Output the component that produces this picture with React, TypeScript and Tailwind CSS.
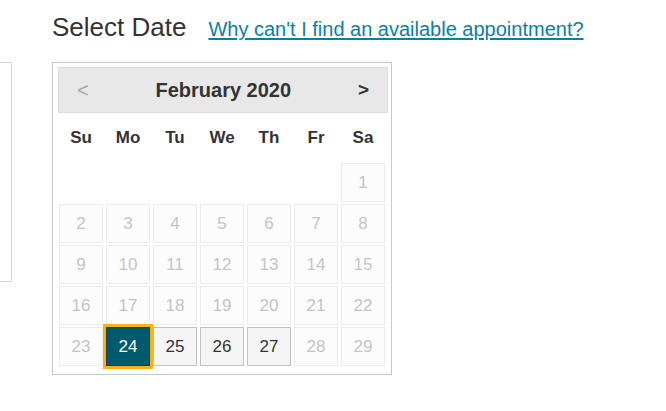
import React from 'react';

type Day = { n: number; state: 'off' | 'open' | 'selected' } | null;

const weekDays = ['Su', 'Mo', 'Tu', 'We', 'Th', 'Fr', 'Sa'];

const open = [25, 26, 27];

function buildWeeks(): Day[][] {
  const cells: Day[] = Array(6).fill(null);
  for (let n = 1; n <= 29; n++) {
    cells.push({ n, state: n === 24 ? 'selected' : open.includes(n) ? 'open' : 'off' });
  }
  const weeks: Day[][] = [];
  for (let i = 0; i < cells.length; i += 7) weeks.push(cells.slice(i, i + 7));
  return weeks;
}

function DayCell({ day }: { day: Day }) {
  if (!day) return <div className="w-[44px] h-[39px]" />;
  if (day.state === 'selected') {
    return (
      <button
        type="button"
        className="w-[44px] h-[39px] flex items-center justify-center bg-[#005a6e] border border-[#2b3a40] outline-[3px] outline-solid outline-[#fbb116] text-white text-[17px]"
      >
        {day.n}
      </button>
    );
  }
  if (day.state === 'open') {
    return (
      <button
        type="button"
        className="w-[44px] h-[39px] flex items-center justify-center bg-[#f5f5f5] border border-[#c2c2c2] text-[#333] text-[17px]"
      >
        {day.n}
      </button>
    );
  }
  return (
    <div className="w-[44px] h-[39px] flex items-center justify-center bg-[#fcfcfc] border border-[#ebebeb] text-[#c4c4c4] text-[17px]">
      {day.n}
    </div>
  );
}

export default function App() {
  const weeks = buildWeeks();
  return (
    <div className="flex w-[666px] h-[411px] bg-white font-['Liberation_Sans',Arial,sans-serif] overflow-hidden">
      <div className="w-[12px] h-[220px] mt-[62px] shrink-0 border-y border-r border-[#d4d4d4]" />

      <div className="ml-[40px] flex flex-col">
        <div className="flex items-baseline gap-[22px] mt-[12px]">
          <h2 className="text-[26px] leading-[30px] text-[#333]">Select Date</h2>
          <a href="#" className="text-[20px] leading-[24px] text-[#0a7fa3] underline underline-offset-[2px]">
            Why can't I find an available appointment?
          </a>
        </div>

        <div className="mt-[20px] w-[340px] border border-[#c8c8c8] pl-[5px] pr-[3px] pt-[4px] pb-[8px]">
          <div className="h-[46px] flex items-center justify-between px-[18px] bg-[#e8e8e8] border border-[#dcdcdc]">
            <button type="button" className="text-[20px] text-[#a8a8a8]">&lt;</button>
            <span className="text-[20px] font-bold text-[#333]">February 2020</span>
            <button type="button" className="text-[19px] font-bold text-[#333]">&gt;</button>
          </div>

          <div className="pl-[1px]">
            <div className="grid grid-cols-[repeat(7,44px)] gap-x-[3px] h-[47px] items-center pt-[2px]">
              {weekDays.map((d) => (
                <div key={d} className="text-center text-[17px] font-bold text-[#333]">
                  {d}
                </div>
              ))}
            </div>
            <div className="mt-[3px] grid grid-cols-[repeat(7,44px)] gap-x-[3px] gap-y-[2px]">
              {weeks.map((w, wi) =>
                w.map((d, di) => <DayCell key={`${wi}-${di}`} day={d} />)
              )}
            </div>
          </div>
        </div>
      </div>
    </div>
  );
}
